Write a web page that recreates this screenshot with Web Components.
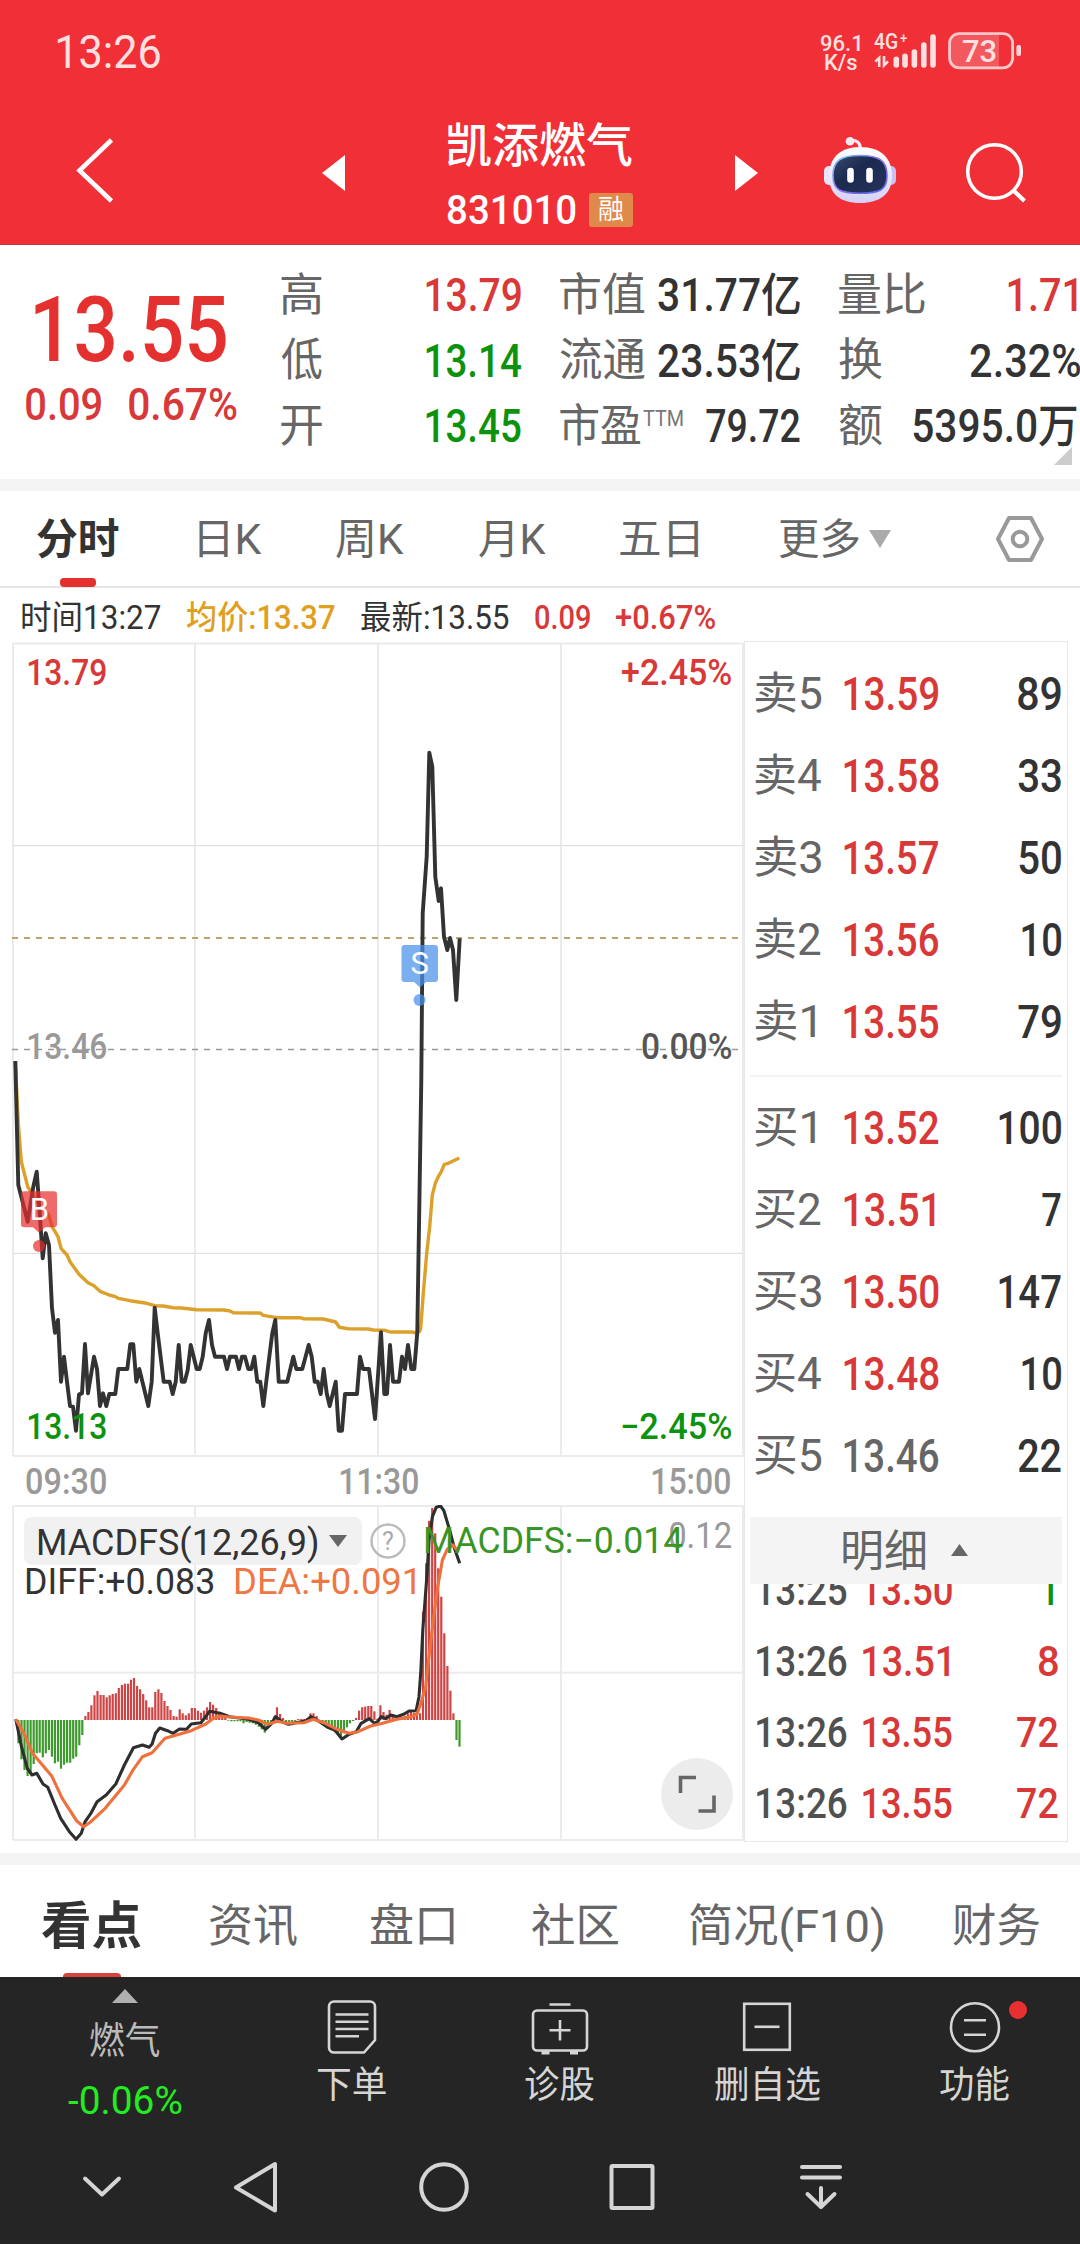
<!DOCTYPE html>
<html lang="zh-CN">
<head>
<meta charset="utf-8">
<title>凯添燃气 831010</title>
<style>
html, body {
    margin: 0;
    background: #fff;
}
body {
    width: 1080px;
    height: 2244px;
    overflow: hidden;
    font-family: Roboto, "Noto Sans CJK SC", sans-serif;
    font-kerning: normal;
    color: #333;
    --up: #d93838;
    --down: #0c920c;
    --grey: #666;
}
.market {
    display: flex;
    height: 1211px;
}
.band {
    height: 12px;
    background: #f4f4f4;
}
</style>
</head>
<body>
<status-bar></status-bar>
<stock-header name="凯添燃气" code="831010" tag="融"></stock-header>
<quote-panel></quote-panel>
<div class="band"></div>
<period-tabs></period-tabs>
<price-info></price-info>
<div class="market">
    <div>
        <time-chart></time-chart>
        <macd-chart></macd-chart>
    </div>
    <order-book></order-book>
</div>
<div class="band"></div>
<section-tabs></section-tabs>
<action-bar></action-bar>
<system-nav></system-nav>

<script>
// 基类：把模板写入 shadow DOM
class BaseElement extends HTMLElement {
    constructor() {
        super();
        this.attachShadow({ mode: 'open' });
    }
    connectedCallback() {
        this.shadowRoot.innerHTML = this.render();
    }
}

// 按字形实际宽度缩放到 w 像素的单行文字
class FitText extends HTMLElement {
    constructor() {
        super();
        this.attachShadow({ mode: 'open' });
        this.shadowRoot.innerHTML = `
        <style>
        :host { display: block; flex: none; height: 1em; line-height: 1; white-space: nowrap; }
        span { display: inline-block; transform-origin: 0 50%; line-height: 1; }
        </style>
        <span><slot></slot></span>`;
    }
    connectedCallback() {
        const w = Number(this.getAttribute('w'));
        const cs = getComputedStyle(this);
        const span = this.shadowRoot.querySelector('span');
        const ctx = FitText.ctx;
        ctx.font = `${cs.fontWeight} ${cs.fontSize} ${cs.fontFamily}`;
        ctx.fontKerning = 'normal';
        const m = ctx.measureText(this.textContent);
        const bearing = m.width - m.actualBoundingBoxRight;
        const ink = span.getBoundingClientRect().width - bearing + m.actualBoundingBoxLeft;
        const scale = w / ink;
        this.style.width = w + 'px';
        span.style.transform = `translateX(${m.actualBoundingBoxLeft * scale}px) scaleX(${scale})`;
    }
}
FitText.ctx = document.createElement('canvas').getContext('2d');

class StatusBar extends BaseElement {
    render() {
        return `
        <style>
        :host { display: flex; height: 102px; background: #f12f37; color: #ffe0e1; align-items: center; }
        .time { font-size: 46px; margin: 1px 0 0 57px; }
        .speed { margin-left: 661px; width: 39px; font-size: 22.5px; font-weight: 500; display: grid; justify-items: center; }
        .speed fit-text { height: 19px; line-height: 19px; }
        .net { margin-left: 13px; width: 63px; height: 36px; }
        .battery { margin-left: 11px; width: 75px; height: 40px; }
        .wrap { display: grid; align-items: center; font-weight: 500; }
        .wrap > * { grid-area: 1 / 1; }
        .g { font-size: 22.5px; align-self: start; margin: -3px 0 0 14px; }
        .p { font-size: 15px; align-self: start; margin: -2px 0 0 40px; }
        .level { font-size: 32px; margin-left: 27px; }
        </style>
        <fit-text class="time" w="103">13:26</fit-text>
        <div class="speed"><fit-text w="39">96.1</fit-text><fit-text w="32">K/s</fit-text></div>
        <div class="wrap">
            <svg class="net" viewBox="873 33 63 36" fill="none" stroke="#ffe0e1">
                <path d="M896.3 59.3V65M905 56.2V65M914.4 52V65M923.8 45V65M933 37V65" stroke-width="5.6" stroke-linecap="round"/>
                <path d="M879.2 67V58l-4 3.6M884 56v9.4l4-4" stroke-width="2.6"/>
            </svg>
            <fit-text class="g" w="23">4G</fit-text>
            <fit-text class="p" w="7">+</fit-text>
        </div>
        <div class="wrap">
            <svg class="battery" viewBox="947 31 75 40">
                <path d="M999 34H959a9 9 0 0 0-9 9v16a9 9 0 0 0 9 9h40z" fill="#fff" opacity=".2"/>
                <rect x="949.6" y="33.6" width="63" height="34.2" rx="9.5" fill="none" stroke="#ffc9cb" stroke-width="2.8"/>
                <rect x="1016.4" y="45" width="4.6" height="11" rx="2" fill="#ffd5d7"/>
            </svg>
            <fit-text class="level" w="33">73</fit-text>
        </div>`;
    }
}

class StockHeader extends BaseElement {
    render() {
        return `
        <style>
        :host { display: flex; height: 143px; background: #f12f37; color: #fff; box-sizing: border-box; border-bottom: 1px solid #c53a42; }
        svg { flex: none; }
        .back { margin: 34px 0 0 74px; }
        .prev { margin: 53px 0 0 208px; }
        .title { margin: 20px 0 0 103px; width: 186px; }
        .name { font-size: 47px; font-weight: 500; }
        .code { display: flex; align-items: center; margin-top: 23px; height: 36px; }
        .num { font-size: 41px; font-weight: 500; }
        .tag { margin-left: 13px; width: 44px; height: 34px; background: #e0894a; border-radius: 3px; font-size: 27px; display: flex; align-items: center; justify-content: center; }
        .next { margin: 53px 0 0 101px; }
        .robot { margin: 33px 0 0 65px; }
        .search { margin: 39px 0 0 67px; }
        </style>
        <svg class="back" width="40" height="68" fill="none" stroke="#fff" stroke-width="4.6"><path d="M37.5 4L5.5 34.5l32 30.5"/></svg>
        <svg class="prev" width="23" height="36" fill="#fff"><path d="M23 0v36L0 18z"/></svg>
        <div class="title">
            <fit-text class="name" w="184">${this.getAttribute('name')}</fit-text>
            <div class="code">
                <fit-text class="num" w="128">${this.getAttribute('code')}</fit-text>
                <div class="tag"><fit-text w="25">${this.getAttribute('tag')}</fit-text></div>
            </div>
        </div>
        <svg class="next" width="23" height="36" fill="#fff"><path d="M0 0v36l23-18z"/></svg>
        <svg class="robot" width="74" height="70" viewBox="824 135 74 70">
            <defs>
                <linearGradient id="shell" x1="0" y1="0" x2="0" y2="1"><stop offset="0" stop-color="#fff"/><stop offset=".6" stop-color="#e6e4fb"/><stop offset="1" stop-color="#d5d0f4"/></linearGradient>
                <linearGradient id="face" x1="0" y1="0" x2="1" y2="1"><stop offset="0" stop-color="#3a4a70"/><stop offset=".4" stop-color="#1b2a4e"/><stop offset="1" stop-color="#26325c"/></linearGradient>
                <linearGradient id="rim" x1="0" y1="0" x2="1" y2="1"><stop offset="0" stop-color="#6fd0ee"/><stop offset=".5" stop-color="#8b6cf0"/><stop offset="1" stop-color="#4f6be8"/></linearGradient>
            </defs>
            <path d="M851 140.5q10-1 10.5 8" fill="none" stroke="#f0e4f4" stroke-width="3.2"/>
            <circle cx="851" cy="141.3" r="4.3" fill="#f8e8f0"/>
            <rect x="825" y="166" width="10" height="19" rx="5" fill="#e9e4fa"/>
            <rect x="887" y="166" width="10" height="19" rx="5" fill="#c9c2f0"/>
            <path d="M861 147c21 0 32 11 32 29s-12 27-32 27-31-9-31-27 11-29 31-29z" fill="url(#shell)"/>
            <path d="M861 155.5c19 0 27 5 27 20s-8 17.700-27 17.700-27-2.700-27-17.700 8-20 27-20z" fill="url(#face)" stroke="url(#rim)" stroke-width="1.6"/>
            <path d="M851.5 171v8.500M870.5 171v8.500" stroke="#fff" stroke-width="6.6" stroke-linecap="round"/>
        </svg>
        <svg class="search" width="64" height="64" viewBox="964 141 64 64" fill="none" stroke="#fff" stroke-width="3.6"><circle cx="994.5" cy="171.500" r="26.8"/><path d="M1013 190l11.500 11" stroke-width="4.2"/></svg>`;
    }
}

const STATS = [
    ['高', 41, '13.79', 95, 'up'], ['市值', 85, '31.77亿', 142, ''], ['量比', 86, '1.71', 69, 'up'],
    ['低', 41, '13.14', 95, 'down'], ['流通', 85, '23.53亿', 142, ''], ['换', 43, '2.32%', 110, 'edge'],
    ['开', 41, '13.45', 95, 'down'], ['市盈', 81, '79.72', 94, ''], ['额', 43, '5395.0万', 164, '']
];

class QuotePanel extends BaseElement {
    render() {
        const cells = STATS.map(([label, lw, value, vw, cls]) => `
            <div class="cell">
                <fit-text class="label" w="${lw}">${label}</fit-text>
                ${label === '市盈' ? '<fit-text class="ttm" w="40">TTM</fit-text>' : ''}
                <fit-text class="value ${cls}" w="${vw}">${value}</fit-text>
            </div>`).join('');
        return `
        <style>
        :host { display: flex; height: 234px; position: relative; }
        .now { width: 281px; color: #e53030; flex: none; }
        .price { font-size: 91px; font-weight: 500; margin: 40px 0 0 34.5px; }
        .change { display: flex; margin: 6px 0 0 26px; font-size: 45px; color: var(--up); font-weight: 500; gap: 28px; }
        .stats { display: grid; grid-template-columns: 240px 240px 238px; column-gap: 39px; grid-auto-rows: 65.6px; padding-top: 17px; height: 200px; font-size: 46px; }
        .cell { display: flex; align-items: center; }
        .label { color: var(--grey); font-size: 45px; margin-top: 1px; }
        .ttm { color: #777; font-size: 22px; margin: 0 0 14px 2px; }
        .value { margin: 1px 0 0 auto; font-weight: 500; }
        .edge { margin-right: -3px; }
        .up { color: var(--up); }
        .down { color: var(--down); }
        .corner { position: absolute; right: 8px; bottom: 14px; }
        </style>
        <div class="now">
            <fit-text class="price" w="191.5">13.55</fit-text>
            <div class="change"><fit-text w="75">0.09</fit-text><fit-text w="108">0.67%</fit-text></div>
        </div>
        <div class="stats">${cells}</div>
        <svg class="corner" width="18" height="18" fill="#ccc"><path d="M18 0v18H0z"/></svg>`;
    }
}

class PeriodTabs extends BaseElement {
    render() {
        return `
        <style>
        :host { display: flex; align-items: center; height: 97px; box-sizing: border-box; border-bottom: 2px solid #e6e6e6; font-size: 42px; color: var(--grey); padding: 1px 36px 0 37px; }
        fit-text { margin-top: 2px; }
        .active { position: relative; font-weight: 700; color: #333; }
        .active::after { content: ""; position: absolute; left: 23px; top: 59px; width: 36px; height: 9px; border-radius: 4px; background: #e53030; }
        svg:last-child { margin-left: auto; }
        </style>
        <fit-text class="active" w="81.5">分时</fit-text>
        <fit-text w="63" style="margin-left:80px">日K</fit-text>
        <fit-text w="68" style="margin-left:74px">周K</fit-text>
        <fit-text w="67" style="margin-left:75px">月K</fit-text>
        <fit-text w="78" style="margin-left:74px">五日</fit-text>
        <fit-text w="80" style="margin-left:81px">更多</fit-text>
        <svg width="22" height="18" style="margin-left:10px" fill="#aaa"><path d="M0 0h22L11 18z"/></svg>
        <svg width="48" height="46" fill="none" stroke="#999" stroke-width="4" stroke-linejoin="round"><path d="M13 2h22l11 21-11 21H13L2 23z"/><circle cx="24" cy="23" r="7.3"/></svg>`;
    }
}

class PriceInfo extends BaseElement {
    render() {
        return `
        <style>
        :host { display: flex; align-items: center; height: 54px; padding: 0 0 0 22px; font-size: 33px; gap: 26px; }
        fit-text { margin-top: 5px; }
        .avg { color: #dfa020; font-weight: 500; }
        .up { color: var(--up); font-weight: 500; }
        </style>
        <fit-text w="139">时间13:27</fit-text>
        <fit-text class="avg" w="148">均价:13.37</fit-text>
        <fit-text w="148">最新:13.55</fit-text>
        <fit-text class="up" w="55">0.09</fit-text>
        <fit-text class="up" w="99">+0.67%</fit-text>`;
    }
}

// 分时数据，单位为 1/3 像素，y 以 1040 为零点
const PRICE = '46,63 55,435 64,470 83,545 100,440 110,395 118,500 128,655 137,580 147,615 156,805 165,878 174,840 183,1025 192,950 201,1025 210,1098 219,1100 228,1172 237,1063 246,1060 255,912 264,1060 282,950 291,987 300,1098 309,1060 319,1098 328,1062 346,1062 355,987 382,987 391,913 400,913 409,1025 418,987 445,1098 455,1025 464,803 473,880 491,1025 509,1025 518,1062 527,1025 536,915 545,1025 554,1025 563,990 572,915 590,987 599,987 608,950 617,880 627,840 636,915 645,950 672,950 681,987 690,950 708,950 717,987 726,950 735,950 745,987 754,987 763,950 772,1025 781,1025 790,1098 808,950 817,880 826,840 836,1025 862,1025 880,950 889,987 907,987 926,915 935,950 944,1025 953,1025 962,1062 971,987 980,1060 989,1098 1007,1025 1016,1172 1026,1172 1035,1062 1071,1062 1080,950 1089,987 1107,987 1125,1137 1143,877 1153,1062 1161,1062 1170,915 1179,1025 1197,1025 1206,950 1215,987 1224,915 1234,987 1243,987 1252,877 1258,500 1264,120 1268,-380 1280,-550 1288,-862 1297,-820 1306,-490 1316,-417 1323,-455 1332,-310 1342,-270 1350,-306 1359,-270 1369,-120 1379,-305';
const AVERAGE = '46,63 55,250 64,365 83,440 100,465 120,500 147,525 156,560 174,590 183,625 201,645 210,665 237,703 264,728 282,737 300,754 328,765 346,770 355,775 390,782 440,790 464,797 490,798 520,803 545,804 590,809 672,810 690,813 700,818 780,819 790,826 830,833 900,833 910,836 970,837 1007,846 1018,862 1045,866 1105,867 1120,870 1155,871 1170,876 1235,876 1250,879 1259,874 1262,865 1270,760 1280,640 1289,560 1297,465 1306,430 1315,410 1324,395 1333,373 1342,371 1378,354';
const DIFF = '33,688 45,770 57,835 67,855 77,850 90,882 100,892 115,945 127,985 145,1025 159,1048 170,1030 178,995 190,970 203,935 222,915 242,882 260,825 279,773 298,765 312,772 318,762 325,730 334,714 350,722 362,730 375,717 390,718 400,702 420,698 430,680 438,664 460,670 480,680 520,688 540,698 555,718 568,700 576,680 590,695 603,703 640,692 650,680 665,692 685,712 700,720 715,747 730,733 745,725 755,700 772,686 783,700 790,694 797,680 806,686 817,675 830,680 845,672 855,663 870,662 876,620 880,540 884,420 893,250 897,150 904,80 912,52 921,48 928,62 940,120 950,175 961,220';
const DEA = '33,688 50,730 68,790 108,858 130,925 160,992 175,1010 190,995 220,955 260,885 279,838 298,800 318,788 345,745 362,738 400,722 430,702 445,686 460,678 480,681 520,684 540,690 560,703 580,694 600,700 635,698 655,688 680,700 705,718 730,730 745,727 775,708 800,700 830,688 860,680 872,672 880,640 890,590 897,500 905,400 915,290 925,210 935,178 947,165 958,185';
const BARS = [0, -70, -118, -150, -168, -160, -132, -100, -98, -112, -100, -90, -110, -130, -125, -146, -134, -128, -128, -116, -110, -76, -45,
    12, 24, 44, 74, 87, 75, 75, 68, 74, 78, 80, 96, 105, 109, 109, 121, 126, 102, 92, 78, 59, 38, 38, 84, 92, 81, 57, 42, 30, 12, 10, 32, 20, 14, 20, 36, 36, 28, 22, 28, 38, 54, 46, 36, 22, 12, 6,
    -2, -4, -4, -4, -4, -10, -6, -8, -10, -14, -20, -28, -38, -26, -12, 10, 38, 18, 6, -10, -14, -16, -8, 3, 3, 3, 6, 20, 20, 12, -6, -12, -18, -24, -30, -36, -44, -56, -40, -22, -10, -3,
    6, 28, 38, 40, 42, 42, 26, 4, 44, 24, 16, 30, 18, 14, 8, 8, 12, 20, 24, 22, 16, 20, 325, 470, 598, 636, 560, 455, 370, 260, 162, 88, 20, -60, -80];

function plot(points, sx, sy, oy) {
    return points.split(' ').map(p => {
        const [x, y] = p.split(',').map(Number);
        return (x / sx).toFixed(1) + ',' + (oy + y / sy).toFixed(1);
    }).join(' ');
}

class TimeChart extends BaseElement {
    render() {
        return `
        <style>
        :host { display: block; position: relative; width: 744px; height: 863px; font-size: 36px; }
        svg { display: block; }
        .label { position: absolute; font-weight: 500; }
        .left { left: 28px; }
        .right { right: 13px; }
        .up { top: 13px; color: var(--up); }
        .mid { top: 387px; color: #999; }
        .mid.right { color: #555; }
        .down { top: 767px; color: var(--down); }
        .axis { display: flex; justify-content: space-between; padding: 7px 14px 0 26px; color: #999; font-weight: 500; }
        </style>
        <svg width="744" height="815" viewBox="0 642 744 815" fill="none">
            <path d="M13 643.5H743.5M13 1456H743.5M13 643V1456M195 643V1456M378 643V1456M561 643V1456M743 643V1456" stroke="#ebebeb" stroke-width="2"/>
            <path d="M13 845.7H743M13 1253.3H743" stroke="#e0e0e0" stroke-width="1.2"/>
            <path d="M12 938H739" stroke="#b9a46f" stroke-width="2" stroke-dasharray="6 6"/>
            <path d="M12 1049.5H739" stroke="#999" stroke-width="1.6" stroke-dasharray="6 6"/>
            <polyline points="${plot(AVERAGE, 3, 3, 1040)}" stroke="#dba12b" stroke-width="3.4" stroke-linejoin="round"/>
            <polyline points="${plot(PRICE, 3, 3, 1040)}" stroke="#333" stroke-width="3.9" stroke-linejoin="round"/>
            <g fill="#e82c2c" fill-opacity=".7"><path d="M24 1191.3h30a3 3 0 0 1 3 3v30a3 3 0 0 1-3 3h-9l-6 5.500-6-5.500h-9a3 3 0 0 1-3-3v-30a3 3 0 0 1 3-3z"/><circle cx="39" cy="1246" r="6"/></g>
            <g fill="#4a90ea" fill-opacity=".72"><path d="M404.5 945h30.500a3 3 0 0 1 3 3v31a3 3 0 0 1-3 3h-9l-6 5.500-6-5.500h-9.500a3 3 0 0 1-3-3v-31a3 3 0 0 1 3-3z"/><circle cx="419.5" cy="1000" r="6"/></g>
            <g fill="#fff" font-size="31" text-anchor="middle"><text x="39.5" y="1220">B</text><text x="419.7" y="974">S</text></g>
        </svg>
        <fit-text class="label left up" w="78">13.79</fit-text>
        <fit-text class="label right up" w="109">+2.45%</fit-text>
        <fit-text class="label left mid" w="78">13.46</fit-text>
        <fit-text class="label right mid" w="89">0.00%</fit-text>
        <fit-text class="label left down" w="78">13.13</fit-text>
        <fit-text class="label right down" w="109">−2.45%</fit-text>
        <div class="axis"><fit-text w="80">09:30</fit-text><fit-text w="78">11:30</fit-text><fit-text w="78">15:00</fit-text></div>`;
    }
}

class MacdChart extends BaseElement {
    render() {
        const bars = BARS.map((v, i) => {
            const h = Math.abs(v) / 3;
            return `<rect x="${(14.3 + 3.042 * i).toFixed(1)}" y="${(v > 0 ? 1720 - h : 1720).toFixed(1)}" width="2.2" height="${h.toFixed(1)}" fill="${v > 0 ? '#cf4444' : '#3f9a2e'}"/>`;
        }).join('');
        return `
        <style>
        :host { display: block; position: relative; width: 744px; height: 336px; font-size: 36px; }
        svg { display: block; }
        .head { position: absolute; left: 24px; top: 12px; display: flex; align-items: center; }
        .picker { display: flex; align-items: center; gap: 12px; width: 324px; height: 48px; padding-left: 14px; background: rgba(240, 240, 240, .92); border-radius: 8px; }
        .picker fit-text { margin-top: 3px; }
        .help { margin: 0 19px 0 8px; }
        .value { color: #3a9426; }
        .values { position: absolute; left: 26px; top: 59px; display: flex; gap: 22px; }
        .dea { color: #ee7744; }
        .max { position: absolute; right: 13px; top: 13px; color: #999; }
        .full { position: absolute; right: 11px; top: 253px; }
        </style>
        <svg width="744" height="337" viewBox="0 1505 744 337" fill="none">
            <path d="M13 1506H743.5M13 1672.7H743.5M13 1840H743.5M13 1506V1840M195 1506V1840M378 1506V1840M561 1506V1840M743 1506V1840" stroke="#ebebeb" stroke-width="2"/>
            ${bars}
            <polyline points="${plot(DIFF, 2.0907, 3, 1490)}" stroke="#2e2e2e" stroke-width="3.1" stroke-linejoin="round"/>
            <polyline points="${plot(DEA, 2.0907, 3, 1490)}" stroke="#f0703c" stroke-width="3.1" stroke-linejoin="round"/>
        </svg>
        <fit-text class="max" w="61">0.12</fit-text>
        <div class="head">
            <div class="picker">
                <fit-text w="279">MACDFS(12,26,9)</fit-text>
                <svg width="18" height="12" fill="#666"><path d="M0 0h18L9 12z"/></svg>
            </div>
            <svg class="help" width="36" height="36"><circle cx="18" cy="18" r="16.5" fill="none" stroke="#bbb" stroke-width="2.4"/><text x="18" y="26.5" font-size="25" fill="#aaa" text-anchor="middle">?</text></svg>
            <fit-text class="value" w="258">MACDFS:−0.014</fit-text>
        </div>
        <div class="values"><fit-text w="187">DIFF:+0.083</fit-text><fit-text class="dea" w="180">DEA:+0.091</fit-text></div>
        <svg class="full" width="72" height="72"><circle cx="36" cy="36" r="36" fill="#ececec"/><path d="M19.5 35V19.5H35M53 37.5V53H37.5" fill="none" stroke="#666" stroke-width="3.6"/></svg>`;
    }
}

const ASKS = [['卖5', '13.59', '89', 43], ['卖4', '13.58', '33', 43], ['卖3', '13.57', '50', 42], ['卖2', '13.56', '10', 39], ['卖1', '13.55', '79', 43]];
const BIDS = [['买1', '13.52', '100', 62], ['买2', '13.51', '7', 19], ['买3', '13.50', '147', 62], ['买4', '13.48', '10', 39], ['买5', '13.46', '22', 43]];
const TICKS = [['13:25', '13.50', '1', 11, 'down one'], ['13:26', '13.51', '8', 19, 'up'], ['13:26', '13.55', '72', 41, 'up'], ['13:26', '13.55', '72', 41, 'up']];

class OrderBook extends BaseElement {
    level([name, price, qty, w]) {
        return `
        <div class="level">
            <fit-text class="name" w="${name.endsWith('1') ? 60 : 66}">${name}</fit-text>
            <div class="price"><fit-text class="${price === '13.46' ? 'flat' : ''}" w="${price.endsWith('1') ? 91 : 94.5}">${price}</fit-text></div>
            <fit-text class="qty" w="${w}">${qty}</fit-text>
        </div>`;
    }
    render() {
        const ticks = TICKS.map(([time, price, qty, w, cls]) => `
            <div class="tick">
                <fit-text class="time" w="90">${time}</fit-text>
                <fit-text w="${price.endsWith('1') ? 86 : 89}">${price}</fit-text>
                <fit-text class="vol ${cls}" w="${w}">${qty}</fit-text>
            </div>`).join('');
        return `
        <style>
        :host { display: block; box-sizing: border-box; width: 324px; height: 1201px; margin-top: -1px; border: 1px solid #e8e8e8; padding: 11px 5px 0; font-weight: 500; overflow: hidden; color: var(--up); }
        .level { display: flex; align-items: center; height: 81.9px; padding: 0 1px 0 5px; font-size: 46px; }
        .price { flex: none; width: 95px; }
        .name { color: var(--grey); font-weight: 400; font-size: 44px; margin-right: 23px; }
        .name[w="60"] { margin-right: 29px; }
        .flat { color: var(--grey); }
        .qty { color: #333; margin-left: auto; }
        hr { margin: 13px 0 10px; border: 0; height: 2px; background: #f4f4f4; }
        .more { display: flex; align-items: center; box-sizing: border-box; height: 67px; margin-top: 20px; padding-left: 93px; background: #f4f4f4; font-size: 44px; color: var(--grey); font-weight: 400; gap: 26px; }
        .more fit-text { margin-top: 3px; }
        .ticks { height: 254px; overflow: hidden; }
        .tick { display: flex; align-items: center; height: 71px; padding: 0 4px 0 7px; gap: 16px; font-size: 42px; position: relative; top: -28.5px; }
        .time { color: #505050; }
        .vol { margin-left: auto; }
        .one { margin-right: 5px; }
        .down { color: var(--down); }
        </style>
        ${ASKS.map(this.level).join('')}
        <hr>
        ${BIDS.map(this.level).join('')}
        <div class="more"><fit-text w="82">明细</fit-text><svg width="17" height="12" fill="#666"><path d="M0 12h17L8.5 0z"/></svg></div>
        <div class="ticks">${ticks}</div>`;
    }
}

class SectionTabs extends BaseElement {
    render() {
        return `
        <style>
        :host { display: flex; align-items: center; position: relative; height: 112px; box-sizing: border-box; padding: 11px 0 0 42px; font-size: 45px; color: var(--grey); }
        .active { font-size: 51px; font-weight: 700; color: #333; }
        :host::after { content: ""; position: absolute; left: 63px; bottom: 0; width: 58px; height: 4px; border-radius: 4px 4px 0 0; background: #d8423c; }
        </style>
        <fit-text class="active" w="99">看点</fit-text>
        <fit-text w="87" style="margin-left:69px">资讯</fit-text>
        <fit-text w="83" style="margin-left:74px">盘口</fit-text>
        <fit-text w="86" style="margin-left:78px">社区</fit-text>
        <fit-text w="193" style="margin-left:72px">简况(F10)</fit-text>
        <fit-text w="87" style="margin-left:70px">财务</fit-text>`;
    }
}

class ActionBar extends BaseElement {
    render() {
        return `
        <style>
        :host { display: flex; height: 164px; background: #252525; color: #d5d5d5; font-size: 37px; }
        .index { width: 249px; display: flex; flex-direction: column; align-items: center; color: #bbb; flex: none; }
        .index svg { margin-top: 12px; }
        .index fit-text:nth-of-type(1) { margin-top: 20px; }
        .index .rate { margin-top: 22px; font-size: 38px; color: #22ec22; }
        .item { width: 207.7px; display: flex; flex-direction: column; align-items: center; position: relative; flex: none; }
        .item svg { margin-top: 20px; margin-bottom: 10px; }
        .dot { position: absolute; right: 52px; top: 24px; width: 18px; height: 18px; border-radius: 50%; background: #e83030; }
        .items { display: flex; margin-left: -1px; }
        </style>
        <div class="index">
            <svg width="26" height="14" fill="#b0b0b0"><path d="M13 0l13 14H0z"/></svg>
            <fit-text w="69.5">燃气</fit-text>
            <fit-text class="rate" w="114">-0.06%</fit-text>
        </div>
        <div class="items">
            <div class="item">
                <svg width="60" height="60" viewBox="-30 0 60 60" fill="none" stroke="#d5d5d5" stroke-width="2.6"><path d="M-18 4.5h36a5 5 0 0 1 5 5V43L12 55.5h-30a5 5 0 0 1-5-5v-41a5 5 0 0 1 5-5z"/><path d="M-16.5 17.5h33M-16.5 24.8h33M-16.5 32h33M-16.5 39.2H7"/></svg>
                <fit-text w="68.5">下单</fit-text>
            </div>
            <div class="item">
                <svg width="60" height="60" viewBox="-30 0 60 60" fill="none" stroke="#d5d5d5" stroke-width="2.6"><rect x="-27" y="13.5" width="54" height="40" rx="4"/><path d="M-10.5 7.5h21M-10.5 33.3h21M0 23v20.5"/><path d="M-18.5 55.5h8M10 55.5h8" stroke-width="4"/></svg>
                <fit-text w="69">诊股</fit-text>
            </div>
            <div class="item">
                <svg width="60" height="60" viewBox="-30 0 60 60" fill="none" stroke="#d5d5d5" stroke-width="2.6"><rect x="-22.8" y="6.8" width="45.6" height="46"/><path d="M-12.5 29.8h25"/></svg>
                <fit-text w="105">删自选</fit-text>
            </div>
            <div class="item">
                <svg width="60" height="60" viewBox="-30 0 60 60" fill="none" stroke="#d5d5d5" stroke-width="2.6"><circle cy="30.3" r="24"/><path d="M-11 23.3h22M-11 37.7h22"/></svg>
                <fit-text w="69">功能</fit-text>
                <i class="dot"></i>
            </div>
        </div>`;
    }
}

class SystemNav extends BaseElement {
    render() {
        return `
        <style>
        :host { display: flex; height: 103px; background: #252525; }
        svg { flex: none; width: 60px; height: 60px; margin-top: 16px; fill: none; stroke: #d5d5d5; stroke-width: 4; stroke-linecap: round; stroke-linejoin: round; }
        svg + svg { margin-left: 128px; }
        </style>
        <svg viewBox="-30 -30 60 60" style="margin-left:72px"><path d="M-17 -8.5L0 7.5 17 -8.5"/></svg>
        <svg viewBox="-30 -30 60 60" style="margin-left:94px"><path d="M19 -23v46.5L-20 .5z"/></svg>
        <svg viewBox="-30 -30 60 60"><circle r="22.8"/></svg>
        <svg viewBox="-30 -30 60 60"><rect x="-20.5" y="-21" width="41" height="42" rx="1"/></svg>
        <svg viewBox="-31 -30 60 60"><path d="M-19 -20h38M-19 -9.5h38M0 1V20M-13.5 7L0 20 13.500 7"/></svg>`;
    }
}

// 注册自定义元素
customElements.define('fit-text', FitText);
customElements.define('status-bar', StatusBar);
customElements.define('stock-header', StockHeader);
customElements.define('quote-panel', QuotePanel);
customElements.define('period-tabs', PeriodTabs);
customElements.define('price-info', PriceInfo);
customElements.define('time-chart', TimeChart);
customElements.define('macd-chart', MacdChart);
customElements.define('order-book', OrderBook);
customElements.define('section-tabs', SectionTabs);
customElements.define('action-bar', ActionBar);
customElements.define('system-nav', SystemNav);
</script>
</body>
</html>
